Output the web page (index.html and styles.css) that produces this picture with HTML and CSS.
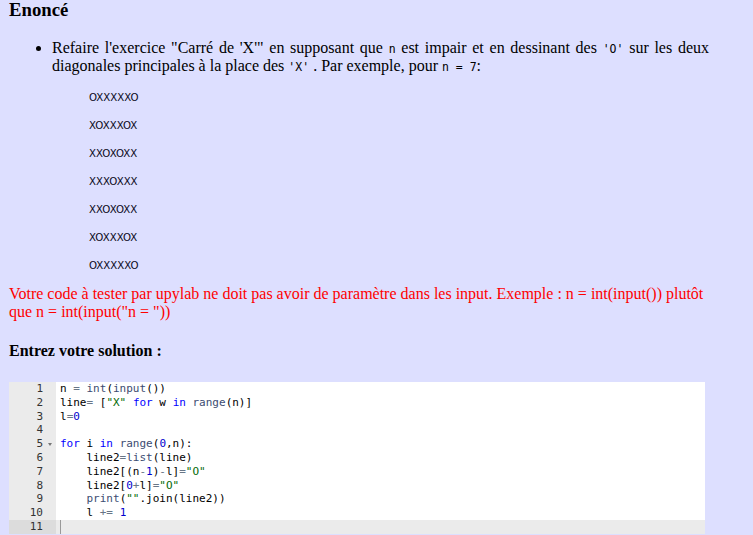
FILE: index.html
```html
<!DOCTYPE html>
<html lang="fr">
<head>
<meta charset="utf-8">
<title>Enoncé</title>
<link rel="stylesheet" href="styles.css">
</head>
<body>
<div class="page">
  <h3 class="title">Enoncé</h3>
  <ul class="task">
    <li>Refaire l'exercice "Carré de 'X'" en supposant que <code>n</code> est impair et en dessinant des <code>'O'</code> sur les deux diagonales principales à la place des <code>'X'</code> . Par exemple, pour <code>n = 7</code>:
      <div class="sample">
        <div>OXXXXXO</div>
        <div>XOXXXOX</div>
        <div>XXOXOXX</div>
        <div>XXXOXXX</div>
        <div>XXOXOXX</div>
        <div>XOXXXOX</div>
        <div>OXXXXXO</div>
      </div>
    </li>
  </ul>
  <p class="warn">Votre code à tester par upylab ne doit pas avoir de paramètre dans les input. Exemple : n = int(input()) plutôt que n = int(input("n = "))</p>
  <h4 class="label">Entrez votre solution :</h4>
  <div class="editor">
    <div class="gutter">
      <div class="gl">1</div>
      <div class="gl">2</div>
      <div class="gl">3</div>
      <div class="gl">4</div>
      <div class="gl fold">5</div>
      <div class="gl">6</div>
      <div class="gl">7</div>
      <div class="gl">8</div>
      <div class="gl">9</div>
      <div class="gl">10</div>
      <div class="gl active">11</div>
    </div>
    <div class="code">
      <div class="ln">n <span class="op">=</span> <span class="fn">int</span>(<span class="fn">input</span>())</div>
      <div class="ln">line<span class="op">=</span> [<span class="str">"X"</span> <span class="kw">for</span> w <span class="kw">in</span> <span class="fn">range</span>(n)]</div>
      <div class="ln">l<span class="op">=</span><span class="num">0</span></div>
      <div class="ln"> </div>
      <div class="ln"><span class="kw">for</span> i <span class="kw">in</span> <span class="fn">range</span>(<span class="num">0</span>,n):</div>
      <div class="ln">    line2<span class="op">=</span><span class="fn">list</span>(line)</div>
      <div class="ln">    line2[(n<span class="op">-</span><span class="num">1</span>)<span class="op">-</span>l]<span class="op">=</span><span class="str">"O"</span></div>
      <div class="ln">    line2[<span class="num">0</span><span class="op">+</span>l]<span class="op">=</span><span class="str">"O"</span></div>
      <div class="ln">    <span class="fn">print</span>(<span class="str">""</span>.join(line2))</div>
      <div class="ln">    l <span class="op">+=</span> <span class="num">1</span></div>
      <div class="ln active"><span class="cursor"></span></div>
    </div>
  </div>
</div>
</body>
</html>
```

FILE: styles.css
```css
html, body {
  margin: 0;
  padding: 0;
  background: #dddfff;
}
body {
  font-family: "Liberation Serif", "Times New Roman", serif;
  font-size: 16px;
  color: #000;
  overflow: hidden;
}
.page {
  width: 700px;
  padding: 0 0 0 9px;
}
.title {
  font-size: 18.72px;
  font-weight: bold;
  margin: -1px 0 18px 0;
}
.task {
  margin: 0;
  padding-left: 43px;
  text-align: justify;
}
.task code {
  font-family: "DejaVu Sans Mono", monospace;
  font-size: 11.5px;
  line-height: 1;
}
.sample {
  margin: 9px 0 0 37px;
  font-family: "DejaVu Sans", sans-serif;
  font-size: 10.2px;
  line-height: 28px;
  text-align: left;
  color: #0a0a1a;
}
.warn {
  color: #ff0000;
  margin: 5px 0 0 0;
}
.label {
  font-size: 16px;
  font-weight: bold;
  margin: 21px 0 22px 0;
}
.editor {
  display: flex;
  width: 696px;
  background: #fff;
  font-family: "DejaVu Sans Mono", monospace;
  font-size: 11px;
  line-height: 13.8px;
}
.gutter {
  width: 47px;
  background: #ebebeb;
  color: #333;
  flex: none;
}
.gl {
  text-align: right;
  padding-right: 13px;
  height: 13.8px;
  position: relative;
}
.gl.fold::after {
  content: "";
  position: absolute;
  right: 4px;
  top: 6px;
  border-left: 2.5px solid transparent;
  border-right: 2.5px solid transparent;
  border-top: 3px solid #777;
}
.gl.active {
  background: #dcdcdc;
}
.code {
  flex: 1;
}
.ln {
  white-space: pre;
  padding-left: 4px;
  height: 13.8px;
}
.ln.active {
  background: #ebebeb;
  position: relative;
}
.cursor {
  position: absolute;
  left: 4px;
  top: 0;
  width: 1px;
  height: 14px;
  background: #999;
}
.kw { color: #0000ff; }
.num { color: #0000cd; }
.str { color: #036a07; }
.fn { color: #3c4c72; }
.op { color: #687687; }
```
